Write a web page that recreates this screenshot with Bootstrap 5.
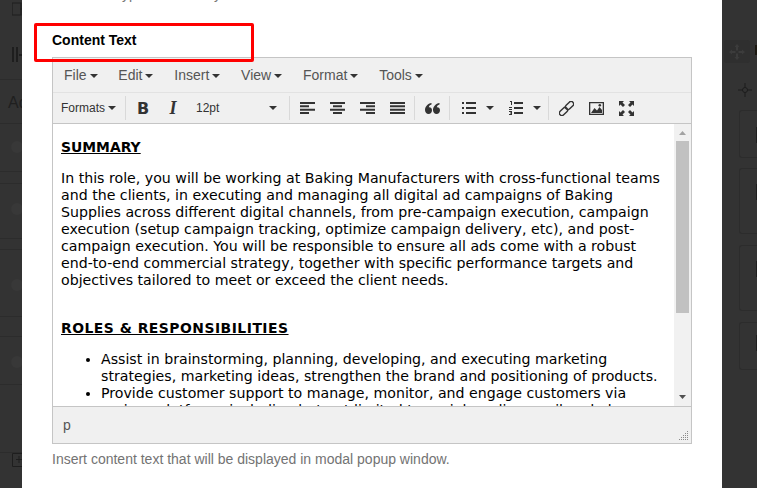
<!doctype html>
<html lang="en">
<head>
<meta charset="utf-8">
<title>Content Text</title>
<link href="https://cdn.jsdelivr.net/npm/bootstrap@5.3.0/dist/css/bootstrap.min.css" rel="stylesheet">
<style>
html,body{height:488px;overflow:hidden;background:#333;}
body{font-family:"Liberation Sans",Arial,sans-serif;color:#000;}
.bd-stage{width:757px;height:488px;background:#333;overflow:hidden;}
.bd-left{width:22px;height:488px;overflow:hidden;flex:none;color:#1f1f1f;}
.bd-lrow{border-bottom:1px solid #2c2c2c;overflow:hidden;white-space:nowrap;padding-left:8px;}
.bd-right{width:35px;height:488px;overflow:hidden;flex:none;}
.bd-tile{width:26px;height:23px;margin:40px 0 0 2px;background:#2f2f2f;border-radius:3px;}
.bd-tilemark{width:3px;height:10px;background:#1d1a12;margin:-18px 0 0 33px;}
.bd-mv{margin:28px 0 0 16px;}
.bd-rcard{width:40px;margin-left:17px;border:1px solid #2c2c2c;border-right:0;border-radius:3px 0 0 3px;overflow:hidden;}
.bd-rcard i{display:block;width:3px;height:16px;background:#1f1f1f;margin-left:16px;}
.bd-sheet{width:700px;height:488px;flex:none;background:#fff;padding-left:30px;position:relative;overflow:hidden;}
.bd-cut{font-size:14px;color:#777;line-height:20px;margin-top:-16px;white-space:nowrap;}
.bd-label{font-size:14px;font-weight:700;line-height:20px;padding-top:26px;height:53px;}
.bd-redbox{position:absolute;left:12px;top:23px;width:220px;height:39px;border:3px solid #f00;border-radius:2px;}
.bd-editor{width:640px;height:387px;border:1px solid #c5c5c5;background:#f0f0f0;}
.bd-menu{height:35px;padding-left:11px;gap:20.8px;border-bottom:1px solid #e2e2e2;font-size:14px;color:#555;line-height:34px;flex:none;}
.bd-caret{display:inline-block;width:0;height:0;border-left:4px solid transparent;border-right:4px solid transparent;border-top:4px solid #333;margin-left:3px;vertical-align:2px;}
.bd-tools{height:31px;flex:none;border-bottom:1px solid #c5c5c5;font-size:12px;color:#333;padding-left:8px;}
.bd-sep{width:1px;height:24px;background:#d9d9d9;flex:none;margin:0 2px;}
.bd-sep-a{margin-left:9px;}
.bd-sep-b{margin-left:3px;}
.bd-btn{width:30px;height:24px;flex:none;}
.bd-b{font:700 16px "DejaVu Sans",sans-serif;color:#333;}
.bd-i{font:italic 700 18px "Liberation Serif",serif;color:#333;}
.bd-font{width:99px;padding:0 10px 0 8px;flex:none;}
.bd-split{width:46px;padding:0 4px 0 10px;flex:none;}
.bd-split .bd-caret{margin-left:0;vertical-align:0;}
.bd-split2{margin-left:1px;}
.bd-ico{display:block;flex:none;fill:#333;}
.bd-body{height:282px;flex:none;background:#fff;}
.bd-text{width:621px;height:282px;overflow:hidden;padding:15px 8px 0;font-family:"DejaVu Sans",Verdana,sans-serif;font-size:14.17px;line-height:17px;color:#000;}
.bd-text p{margin:0 0 14px;}
.bd-text ul{margin:0;padding-left:40px;}
.bd-text .bd-h{font-size:13.9px;font-weight:700;text-decoration:underline;}
.bd-text .bd-h2{letter-spacing:.5px;margin-bottom:14px;}
.bd-gapline{height:17px;}
.bd-scroll{width:17px;height:282px;background:#f1f1f1;flex:none;}
.bd-thumb{height:172px;margin:0 2px;background:#c1c1c1;}
.bd-arr{height:17px;width:17px;}
.bd-arr-end{margin-top:76px;}
.bd-status{height:37px;border-top:1px solid #c5c5c5;font-size:14px;color:#555;padding-left:10px;line-height:37px;position:relative;flex:none;}
.bd-grip{position:absolute;right:2px;bottom:2px;}
.bd-hint{font-size:14px;color:#737373;line-height:20px;margin-top:5px;}
</style>
</head>
<body>
<div class="bd-stage d-flex">

<div class="bd-left">
  <div class="bd-lrow" style="height:80px">
    <svg width="14" height="70" viewBox="0 0 14 70" class="d-block" style="margin:0 0 0 4px"><path d="M0 3h9v12H0zM8 9h6M11 6v6" fill="none" stroke="#1e1e1e" stroke-width="1.2"/><path d="M0 47h2v15H0zM4 47h2v15H4zM7 54h7v2H7zM10 51h2v8h-2z" fill="#1e1e1e"/></svg>
  </div>
  <div class="bd-lrow" style="height:44px;font-size:16px;line-height:46px;">Add</div>
  <div class="bd-lrow" style="height:48px;padding-top:16px"><svg width="14" height="14" viewBox="0 0 14 14" class="d-block"><circle cx="9" cy="7" r="6" fill="#383838"/></svg></div>
  <div class="bd-lrow" style="height:12px"></div>
  <div class="bd-lrow" style="height:55px;padding-top:18px"><svg width="14" height="14" viewBox="0 0 14 14" class="d-block"><circle cx="9" cy="7" r="6" fill="#383838"/></svg></div>
  <div class="bd-lrow" style="height:11px"></div>
  <div class="bd-lrow" style="height:67px;padding-top:28px"><svg width="14" height="14" viewBox="0 0 14 14" class="d-block"><circle cx="9" cy="7" r="6" fill="#383838"/></svg></div>
  <div class="bd-lrow" style="height:20px"></div>
  <div class="bd-lrow" style="height:48px;padding-top:18px"><svg width="14" height="14" viewBox="0 0 14 14" class="d-block"><circle cx="9" cy="7" r="6" fill="#383838"/></svg></div>
  <div class="bd-lrow" style="height:68px"></div>
  <div class="bd-lrow" style="height:35px;border:0;padding-left:12px"><svg width="10" height="14" viewBox="0 0 10 14" class="d-block"><path d="M10 .5H.5v13H10M7 3v7M4 6.500h6" fill="none" stroke="#1e1e1e"/></svg></div>
</div>

<div class="bd-sheet">
<div class="bd-redbox"></div>
<div class="bd-cut">Select the type of modal by</div>
<div class="bd-label">Content Text</div>
<div class="bd-editor d-flex flex-column">
  <div class="bd-menu d-flex">
    <span>File<i class="bd-caret"></i></span><span>Edit<i class="bd-caret"></i></span><span>Insert<i class="bd-caret"></i></span><span>View<i class="bd-caret"></i></span><span>Format<i class="bd-caret"></i></span><span>Tools<i class="bd-caret"></i></span>
  </div>
  <div class="bd-tools d-flex align-items-center">
    <span>Formats<i class="bd-caret"></i></span>
    <span class="bd-sep bd-sep-a"></span>
    <span class="bd-btn d-flex align-items-center justify-content-center bd-b">B</span>
    <span class="bd-btn d-flex align-items-center justify-content-center bd-i">I</span>
    <span class="bd-font d-flex align-items-center justify-content-between"><span>12pt</span><i class="bd-caret"></i></span>
    <span class="bd-sep"></span>
    <span class="bd-btn d-flex align-items-center justify-content-center"><svg class="bd-ico" width="15" height="12" viewBox="0 0 15 12"><path d="M0 0h15v2H0zM0 3.300h9v2H0zM0 6.700h15v2H0zM0 10h9v2H0z"/></svg></span>
    <span class="bd-btn d-flex align-items-center justify-content-center"><svg class="bd-ico" width="15" height="12" viewBox="0 0 15 12"><path d="M0 0h15v2H0zM3 3.300h9v2H3zM0 6.700h15v2H0zM3 10h9v2H3z"/></svg></span>
    <span class="bd-btn d-flex align-items-center justify-content-center"><svg class="bd-ico" width="15" height="12" viewBox="0 0 15 12"><path d="M0 0h15v2H0zM6 3.300h9v2H6zM0 6.700h15v2H0zM6 10h9v2H6z"/></svg></span>
    <span class="bd-btn d-flex align-items-center justify-content-center"><svg class="bd-ico" width="15" height="12" viewBox="0 0 15 12"><path d="M0 0h15v2H0zM0 3.300h15v2H0zM0 6.700h15v2H0zM0 10h15v2H0z"/></svg></span>
    <span class="bd-sep"></span>
    <span class="bd-btn d-flex align-items-center justify-content-center"><svg class="bd-ico" width="15" height="11" viewBox="0 0 15 11"><path d="M6.500 0v1.500C4.800 2 4 3 3.800 4.300 5.500 4 7 5.300 7 7.300 7 9.500 5.500 11 3.500 11 1.400 11 0 9.300 0 7 0 3.500 2.800.5 6.500 0zM14.500 0v1.500c-1.700.5-2.500 1.500-2.700 2.800C13.500 4 15 5.300 15 7.300 15 9.500 13.500 11 11.500 11 9.400 11 8 9.300 8 7 8 3.500 10.800.5 14.500 0z"/></svg></span>
    <span class="bd-sep"></span>
    <span class="bd-split d-flex align-items-center justify-content-between"><svg class="bd-ico" width="14" height="12" viewBox="0 0 14 12"><path d="M0 0h2v2H0zM4 0h10v2H4zM0 5h2v2H0zM4 5h10v2H4zM0 10h2v2H0zM4 10h10v2H4z"/></svg><i class="bd-caret"></i></span>
    <span class="bd-split bd-split2 d-flex align-items-center justify-content-between"><svg class="bd-ico" width="14" height="14" viewBox="0 0 14 14"><path d="M1 0h2v4H2V1H1zM0 6h3v1H1v1h2v1H0V8h1V7H0zM0 10h3v4H0v-1h2v-.6H1v-.8h1V11H0zM5 1h9v2H5zM5 6h9v2H5zM5 11h9v2H5z"/></svg><i class="bd-caret"></i></span>
    <span class="bd-sep bd-sep-b"></span>
    <span class="bd-btn d-flex align-items-center justify-content-center"><svg class="bd-ico" width="15" height="15" viewBox="0 0 15 15"><g fill="none" stroke="#333" stroke-width="1.400" transform="rotate(-45 7.500 7.500)"><rect x="-1.500" y="5" width="9.500" height="5" rx="2.500"/><rect x="7" y="5" width="9.500" height="5" rx="2.500"/></g></svg></span>
    <span class="bd-btn d-flex align-items-center justify-content-center"><svg class="bd-ico" width="15" height="13" viewBox="0 0 15 13"><path fill-rule="evenodd" d="M0 0h15v13H0zM1.300 1.300v10.400h12.400V1.300z"/><path d="M2 11l3.500-5 2.500 2.500L10.500 5 13 8v3z"/><circle cx="10.800" cy="3.300" r="1.300"/></svg></span>
    <span class="bd-btn d-flex align-items-center justify-content-center"><svg class="bd-ico" width="15" height="15" viewBox="0 0 15 15"><path d="M0 0h5L3.500 1.500 6 4 4 6 1.500 3.500 0 5zM15 0v5l-1.500-1.500L11 6 9 4l2.500-2.500L10 0zM0 15v-5l1.500 1.500L4 9l2 2-2.500 2.500L5 15zM15 15h-5l1.500-1.500L9 11l2-2 2.500 2.500L15 10z"/></svg></span>
  </div>
  <div class="bd-body d-flex">
    <div class="bd-text">
      <p class="bd-h">SUMMARY</p>
      <p>In this role, you will be working at Baking Manufacturers with cross-functional teams and the clients, in executing and managing all digital ad campaigns of Baking Supplies across different digital channels, from pre-campaign execution, campaign execution (setup campaign tracking, optimize campaign delivery, etc), and post-campaign execution. You will be responsible to ensure all ads come with a robust end-to-end commercial strategy, together with specific performance targets and objectives tailored to meet or exceed the client needs.</p>
      <div class="bd-gapline"></div>
      <p class="bd-h bd-h2">ROLES &amp; RESPONSIBILITIES</p>
      <ul>
        <li>Assist in brainstorming, planning, developing, and executing marketing strategies, marketing ideas, strengthen the brand and positioning of products.</li>
        <li>Provide customer support to manage, monitor, and engage customers via various platforms including but not limited to social media, email and phone.</li>
      </ul>
    </div>
    <div class="bd-scroll">
      <div class="bd-arr"><svg width="17" height="17" viewBox="0 0 17 17" class="d-block"><path d="M5 11l3.500-4 3.500 4z" fill="#a3a3a3"/></svg></div>
      <div class="bd-thumb"></div>
      <div class="bd-arr bd-arr-end"><svg width="17" height="17" viewBox="0 0 17 17" class="d-block"><path d="M5 6l3.500 4 3.500-4z" fill="#505050"/></svg></div>
    </div>
  </div>
  <div class="bd-status">p<svg class="bd-grip" width="10" height="10" viewBox="0 0 10 10"><path d="M8 0h1v1H8zM6 2h1v1H6zM8 2h1v1H8zM4 4h1v1H4zM6 4h1v1H6zM8 4h1v1H8zM2 6h1v1H2zM4 6h1v1H4zM6 6h1v1H6zM8 6h1v1H8zM0 8h1v1H0zM2 8h1v1H2zM4 8h1v1H4zM6 8h1v1H6zM8 8h1v1H8z" fill="#8a8a8a"/></svg></div>
</div>
<div class="bd-hint">Insert content text that will be displayed in modal popup window.</div>
</div>

<div class="bd-right">
  <div class="bd-tile d-flex align-items-center justify-content-center"><svg width="16" height="16" viewBox="0 0 16 16"><path d="M8 0l2.500 3H9v3.500h-2V3H5.500zM8 16l-2.500-3H7V9.500h2V13h1.500zM0 8l3-2.500V7h3.500v2H3v1.500zM16 8l-3 2.500V9H9.500V7H13V5.500z" fill="#3c3c3c"/></svg></div>
  <div class="bd-tilemark"></div>
  <svg class="bd-mv d-block" width="14" height="14" viewBox="0 0 14 14"><circle cx="7" cy="7" r="2.500" fill="none" stroke="#1c1c1c"/><path d="M7 0v4.500M7 9.500V14M0 7h4.500M9.500 7H14" stroke="#1c1c1c"/></svg>
  <div class="bd-rcard" style="height:48px;margin-top:13px;padding-top:16px"><i></i></div>
  <div class="bd-rcard" style="height:66px;margin-top:10px;padding-top:15px"><i></i></div>
  <div class="bd-rcard" style="height:66px;margin-top:11px;padding-top:15px"><i></i></div>
  <div class="bd-rcard" style="height:48px;margin-top:11px;padding-top:12px"><i></i></div>
</div>

</div>
<script src="https://cdn.jsdelivr.net/npm/bootstrap@5.3.0/dist/js/bootstrap.bundle.min.js"></script>
</body>
</html>
